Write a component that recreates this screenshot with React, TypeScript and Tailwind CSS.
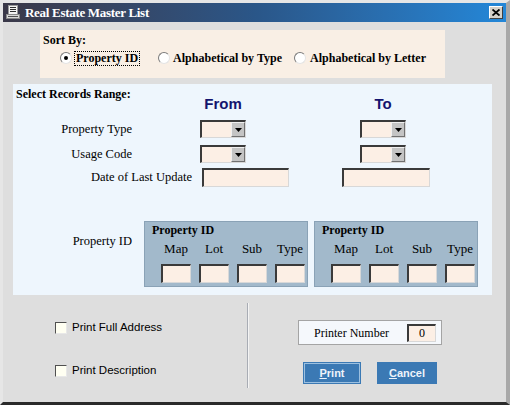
import React from "react";

const serif = "font-['Liberation_Serif','Times_New_Roman',serif]";
const sans = "font-['Liberation_Sans',Arial,sans-serif]";

const sunken =
  "bg-[#fcefe5] border-t-2 border-l-2 border-b border-r border-t-[#3a3a3a] border-l-[#3a3a3a] border-b-[#d8d8d8] border-r-[#d8d8d8]";

function Radio({ checked }: { checked?: boolean }) {
  return (
    <span className="flex h-3 w-3 shrink-0 items-center justify-center rounded-full border border-t-[#7a7a7a] border-l-[#7a7a7a] border-b-[#e4e4e4] border-r-[#e4e4e4] bg-white">
      {checked && <span className="h-[4px] w-[4px] rounded-full bg-black" />}
    </span>
  );
}

function Dropdown() {
  return (
    <div className={`flex h-[18px] w-[46px] ${sunken}`}>
      <div className="flex-1" />
      <div className="flex w-[14px] items-center justify-center border border-t-[#f0f0f0] border-l-[#f0f0f0] border-b-[#707070] border-r-[#707070] bg-[#c4c4c4]">
        <svg width="7" height="4" viewBox="0 0 7 4">
          <path d="M0 0h7L3.5 4z" fill="#000" />
        </svg>
      </div>
    </div>
  );
}

function PropBox() {
  const labels = ["Map", "Lot", "Sub", "Type"];
  return (
    <div className="flex h-[66px] w-[164px] flex-col border border-[#8aa2b6] bg-[#a2b9cb] pl-[16px]">
      <div className={`${serif} -ml-[9px] mt-[1px] text-[12px] font-bold leading-[14px] text-black`}>
        Property ID
      </div>
      <div className="mt-[4px] flex gap-[8px]">
        {labels.map((l) => (
          <div key={l} className={`${serif} w-[30px] text-center text-[13px] leading-[15px] whitespace-nowrap text-black`}>
            {l}
          </div>
        ))}
      </div>
      <div className="mt-[8px] flex gap-[8px]">
        {labels.map((l) => (
          <div key={l} className={`h-[19px] w-[30px] ${sunken}`} />
        ))}
      </div>
    </div>
  );
}

export default function App() {
  return (
    <div className="h-[405px] w-[510px] overflow-hidden bg-[#e4e4e4]">
      <div className="flex h-full flex-col border-t-[3px] border-l-[3px] border-r-[4px] border-b-[3px] border-t-[#e6e6e6] border-l-[#e6e6e6] border-r-[#a8a8a8] border-b-[#2a2a2a] bg-[#dedede]">
        {/* Title bar */}
        <div className="flex h-[19px] shrink-0 items-center bg-linear-to-r from-[#3a3848] via-[#2a5688] to-[#2387d8] pl-[3px]">
          <svg width="15" height="15" viewBox="0 0 15 15" className="shrink-0">
            <rect x="2.5" y="0.5" width="9" height="9" fill="#f4f4f4" stroke="#9a9a9a" />
            <path d="M4 2.5h6M4 4.5h6M4 6.5h6" stroke="#303030" strokeWidth="1" />
            <rect x="0.5" y="9.5" width="13" height="4" fill="#d8d8d8" stroke="#8a8a8a" />
            <path d="M2 11.5h10" stroke="#505050" />
          </svg>
          <span className={`${serif} ml-[4px] text-[13px] font-bold leading-none tracking-[-0.3px] text-white`}>
            Real Estate Master List
          </span>
          <div className="ml-auto mr-[3px] flex h-[13px] w-[14px] items-center justify-center border border-t-white border-l-white border-b-[#404040] border-r-[#404040] bg-[#d4d0c8]">
            <svg width="8" height="7" viewBox="0 0 8 7">
              <path d="M0.5 0.5l7 6M7.5 0.5l-7 6" stroke="#000" strokeWidth="1.8" />
            </svg>
          </div>
        </div>

        {/* Sort By */}
        <div className="ml-[37px] mt-[8px] h-[48px] w-[405px] bg-[#f9efe5] pl-[3px] pt-[3px]">
          <div className={`${serif} text-[12px] font-bold leading-[14px] text-black`}>Sort By:</div>
          <div className={`${serif} mt-[3px] flex h-[16px] items-center text-[12px] font-bold text-black`}>
            <span className="ml-[17px]">
              <Radio checked />
            </span>
            <span className="ml-[2px] border border-dotted border-black px-[1px] leading-[13px]">Property ID</span>
            <span className="ml-[18px]">
              <Radio />
            </span>
            <span className="ml-[3px]">Alphabetical by Type</span>
            <span className="ml-[12px]">
              <Radio />
            </span>
            <span className="ml-[4px]">Alphabetical by Letter</span>
          </div>
        </div>

        {/* Select Records Range */}
        <div className="ml-[10px] mt-[6px] flex h-[211px] w-[479px] flex-col bg-[#eef6fd]">
          <div className="flex items-start">
            <div className={`${serif} w-[187px] pl-[3px] pt-[3px] text-[12px] font-bold leading-[14px] text-black`}>
              Select Records Range:
            </div>
            <div className={`${sans} mt-[11px] w-[46px] text-center text-[15px] font-bold leading-[17px] text-[#14146e]`}>
              From
            </div>
            <div className={`${sans} ml-[114px] mt-[11px] w-[46px] text-center text-[15px] font-bold leading-[17px] text-[#14146e]`}>
              To
            </div>
          </div>

          <div className="mt-[8px] flex items-center">
            <div className={`${serif} w-[119px] text-right text-[12.5px] leading-[15px] text-black`}>Property Type</div>
            <div className="ml-[68px]">
              <Dropdown />
            </div>
            <div className="ml-[114px]">
              <Dropdown />
            </div>
          </div>

          <div className="mt-[7px] flex items-center">
            <div className={`${serif} w-[119px] text-right text-[12.5px] leading-[15px] text-black`}>Usage Code</div>
            <div className="ml-[68px]">
              <Dropdown />
            </div>
            <div className="ml-[114px]">
              <Dropdown />
            </div>
          </div>

          <div className="mt-[5px] flex items-center">
            <div className={`${serif} w-[179px] text-right text-[12.5px] leading-[15px] text-black`}>Date of Last Update</div>
            <div className={`ml-[10px] h-[19px] w-[87px] ${sunken}`} />
            <div className={`ml-[53px] h-[19px] w-[88px] ${sunken}`} />
          </div>

          <div className="mt-[34px] flex items-start">
            <div className={`${serif} mt-[13px] w-[119px] text-right text-[12.5px] leading-[15px] text-black`}>Property ID</div>
            <div className="ml-[12px]">
              <PropBox />
            </div>
            <div className="ml-[6px]">
              <PropBox />
            </div>
          </div>
        </div>

        {/* Bottom */}
        <div className="flex flex-1">
          <div className={`${sans} w-[244px] pl-[52px] pt-[27px] text-[11.5px] text-black`}>
            <div className="flex h-[12px] items-center">
              <span className="h-[12px] w-[12px] border border-t-[#505050] border-l-[#505050] border-b-[#e8e8e8] border-r-[#e8e8e8] bg-[#fffff2]" />
              <span className="ml-[5px] leading-none">Print Full Address</span>
            </div>
            <div className="mt-[31px] flex h-[12px] items-center">
              <span className="h-[12px] w-[12px] border border-t-[#505050] border-l-[#505050] border-b-[#e8e8e8] border-r-[#e8e8e8] bg-[#fffff2]" />
              <span className="ml-[5px] leading-none">Print Description</span>
            </div>
          </div>
          <div className="mt-[8px] h-[85px] w-[2px] border-l border-r border-l-[#a8acb4] border-r-[#f4f4f4]" />
          <div className="ml-[49px] pt-[25px]">
            <div className="flex h-[25px] w-[144px] items-center border border-[#a4a4a4] bg-[#f5f8fc] pl-[15px]">
              <span className={`${serif} text-[12px] leading-none text-black`}>Printer Number</span>
              <div className={`${serif} ml-auto mr-[5px] flex h-[18px] w-[29px] items-center justify-center text-[12px] text-black ${sunken}`}>
                0
              </div>
            </div>
            <div className={`${sans} ml-[5px] mt-[17px] flex text-[11px] font-bold text-[#eef3fa]`}>
              <div className="flex h-[22px] w-[58px] items-center justify-center bg-[#3b79b4] p-[1px]">
                <div className="flex h-full w-full items-center justify-center border border-[#9cc0e0]">
                  <span>
                    <span className="underline">P</span>rint
                  </span>
                </div>
              </div>
              <div className="ml-[16px] flex h-[22px] w-[60px] items-center justify-center bg-[#3b79b4]">
                <span>
                  <span className="underline">C</span>ancel
                </span>
              </div>
            </div>
          </div>
        </div>
      </div>
    </div>
  );
}
